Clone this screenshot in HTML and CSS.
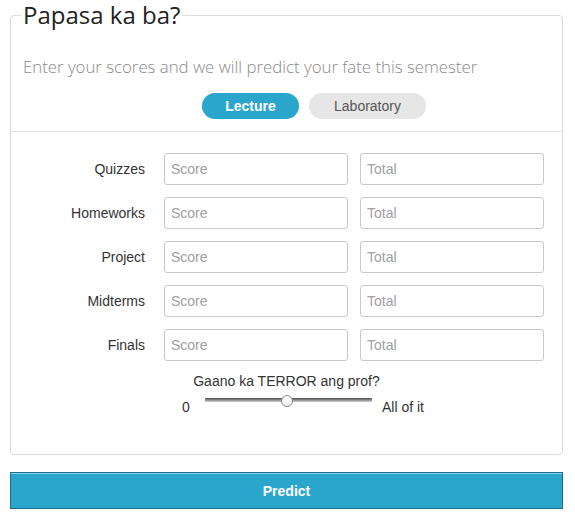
FILE: index.html
```html
<!DOCTYPE html>
<html>
<head>
<meta charset="utf-8">
<link rel="stylesheet" href="styles.css">
</head>
<body>
<div class="page">
  <fieldset class="card">
    <legend class="title">Papasa ka ba?</legend>
    <p class="subtitle">Enter your scores and we will predict your fate this semester</p>
    <div class="tabs">
      <span class="pill pill-active">Lecture</span>
      <span class="pill">Laboratory</span>
    </div>
    <div class="divider"></div>
    <div class="rows">
      <div class="row"><span class="label">Quizzes</span><input class="field" placeholder="Score"><input class="field" placeholder="Total"></div>
      <div class="row"><span class="label">Homeworks</span><input class="field" placeholder="Score"><input class="field" placeholder="Total"></div>
      <div class="row"><span class="label">Project</span><input class="field" placeholder="Score"><input class="field" placeholder="Total"></div>
      <div class="row"><span class="label">Midterms</span><input class="field" placeholder="Score"><input class="field" placeholder="Total"></div>
      <div class="row"><span class="label">Finals</span><input class="field" placeholder="Score"><input class="field" placeholder="Total"></div>
    </div>
    <div class="slider-block">
      <div class="slider-title">Gaano ka TERROR ang prof?</div>
      <div class="slider-row">
        <span class="slider-min">0</span>
        <div class="track"><span class="thumb"></span></div>
        <span class="slider-max">All of it</span>
      </div>
    </div>
  </fieldset>
  <button class="predict">Predict</button>
</div>
</body>
</html>
```
FILE: styles.css
```css
html, body {
  margin: 0;
  padding: 0;
  background: #fff;
}
.page {
  padding: 0 12px 0 10px;
  font-family: "Liberation Sans", Arial, sans-serif;
}
.card {
  margin: 0;
  padding: 0;
  border: 1px solid #dcdcdc;
  border-radius: 4px;
  height: 455px;
  box-sizing: border-box;
}
.title {
  margin-left: 10px;
  padding: 0 2px;
  font-family: "Open Sans", sans-serif;
  font-size: 24px;
  line-height: 30px;
  color: #222;
  font-weight: 400;
}
.subtitle {
  margin: 25px 0 0 12px;
  font-family: "Open Sans", sans-serif;
  font-weight: 300;
  font-size: 16.8px;
  line-height: 24px;
  color: #8a8a8a;
}
.tabs {
  display: flex;
  gap: 10px;
  margin: 14px 0 0 191px;
}
.pill {
  display: flex;
  align-items: center;
  justify-content: center;
  height: 26px;
  border-radius: 13px;
  background: #e6e6e6;
  color: #555;
  font-size: 14px;
  width: 117px;
}
.pill-active {
  width: 97px;
  background: #2aa6cc;
  color: #fff;
  font-weight: bold;
}
.divider {
  height: 1px;
  background: #e3e3e3;
  margin-top: 12px;
}
.rows {
  display: flex;
  flex-direction: column;
  gap: 12px;
  margin-top: 21px;
}
.row {
  display: flex;
  align-items: center;
  gap: 12px;
}
.label {
  width: 134px;
  text-align: right;
  margin-right: 7px;
  font-size: 14px;
  color: #333;
}
.field {
  width: 184px;
  height: 32px;
  box-sizing: border-box;
  border: 1px solid #c8c8c8;
  border-radius: 3px;
  padding: 0 6px;
  font-family: "Liberation Sans", Arial, sans-serif;
  font-size: 14px;
  color: #333;
  margin: 0;
}
.field::placeholder {
  color: #a0a0a0;
}
.slider-block {
  margin-top: 11px;
}
.slider-title {
  text-align: center;
  font-size: 14px;
  line-height: 18px;
  color: #333;
}
.slider-row {
  display: flex;
  align-items: center;
  margin: 0 0 0 171px;
  height: 20px;
}
.slider-min {
  font-size: 14px;
  color: #333;
  width: 23px;
  line-height: 20px;
  margin-top: 14px;
}
.track {
  position: relative;
  width: 167px;
  height: 4px;
  background: linear-gradient(#4a4a4a, #9a9a9a 60%, #cfcfcf);
  border-radius: 1px;
  margin-top: 0;
}
.thumb {
  position: absolute;
  left: 76px;
  top: -3px;
  width: 12px;
  height: 12px;
  box-sizing: border-box;
  border-radius: 50%;
  background: linear-gradient(#fff, #eee);
  border: 1px solid #8a8a8a;
}
.slider-max {
  margin-left: 10px;
  font-size: 14px;
  color: #333;
  line-height: 20px;
  margin-top: 14px;
}
.predict {
  display: block;
  width: 100%;
  height: 37px;
  margin-top: 17px;
  background: #2aa6cc;
  border: 1px solid #1c6f8c;
  box-shadow: inset 0 1px 0 #8fd3ea;
  color: #fff;
  font-family: "Liberation Sans", Arial, sans-serif;
  font-weight: bold;
  font-size: 14px;
  border-radius: 0;
  padding: 0;
}
```
